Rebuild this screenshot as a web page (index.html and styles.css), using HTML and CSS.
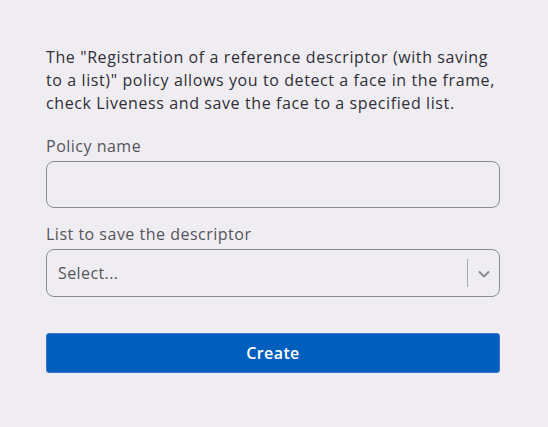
FILE: index.html
```html
<!DOCTYPE html>
<html>
<head>
<meta charset="utf-8">
<link rel="stylesheet" href="styles.css">
</head>
<body>
<div class="page">
  <form class="form">
    <p class="desc">The "Registration of a reference descriptor (with saving to a list)" policy allows you to detect a face in the frame, check Liveness and save the face to a specified list.</p>
    <div class="field">
      <label class="label">Policy name</label>
      <div class="input"></div>
    </div>
    <div class="field">
      <label class="label">List to save the descriptor</label>
      <div class="select">
        <span class="placeholder">Select...</span>
        <span class="sep"></span>
        <span class="chev"><svg width="14" height="14" viewBox="0 0 14 14"><path d="M2.5 5 L7 9.5 L11.5 5" fill="none" stroke="#8a8a90" stroke-width="2" stroke-linecap="round" stroke-linejoin="round"/></svg></span>
      </div>
    </div>
    <button type="button" class="btn">Create</button>
  </form>
</div>
</body>
</html>
```
FILE: styles.css
```css
html, body {
  margin: 0;
  padding: 0;
  background: #efedf2;
}
body {
  font-family: "Open Sans", "DejaVu Sans", sans-serif;
  color: #2b2b30;
}
.page {
  width: 548px;
  height: 427px;
  padding: 46px 0 0 46px;
  box-sizing: border-box;
}
.form {
  width: 454px;
  display: flex;
  flex-direction: column;
}
.desc {
  margin: 0;
  font-size: 16px;
  line-height: 23px;
  letter-spacing: 0.6px;
  color: #2f2f35;
}
.field {
  display: flex;
  flex-direction: column;
}
.label {
  font-size: 16px;
  line-height: 20px;
  color: #55555b;
  letter-spacing: 0.5px;
  margin-bottom: 5px;
}
.desc + .field { margin-top: 21px; }
.field + .field { margin-top: 16px; }
.input {
  height: 47px;
  box-sizing: border-box;
  border: 1px solid #8d8c92;
  border-radius: 8px;
  background: #efedf2;
}
.select {
  height: 48px;
  box-sizing: border-box;
  border: 1px solid #8d8c92;
  border-radius: 8px;
  display: flex;
  align-items: center;
  padding-left: 11px;
}
.placeholder {
  flex: 1;
  font-size: 16px;
  letter-spacing: 0.4px;
  color: #55555b;
}
.sep {
  width: 1px;
  height: 28px;
  background: #a9a8ad;
}
.chev {
  width: 31px;
  display: flex;
  justify-content: center;
  align-items: center;
  padding-top: 2px;
}
.btn {
  margin-top: 36px;
  height: 40px;
  border: 1px solid #3a78c8;
  border-radius: 3px;
  background: #005ebf;
  color: #ffffff;
  font-family: "Open Sans", "DejaVu Sans", sans-serif;
  font-size: 16px;
  font-weight: 600;
  letter-spacing: 0.4px;
}
```
